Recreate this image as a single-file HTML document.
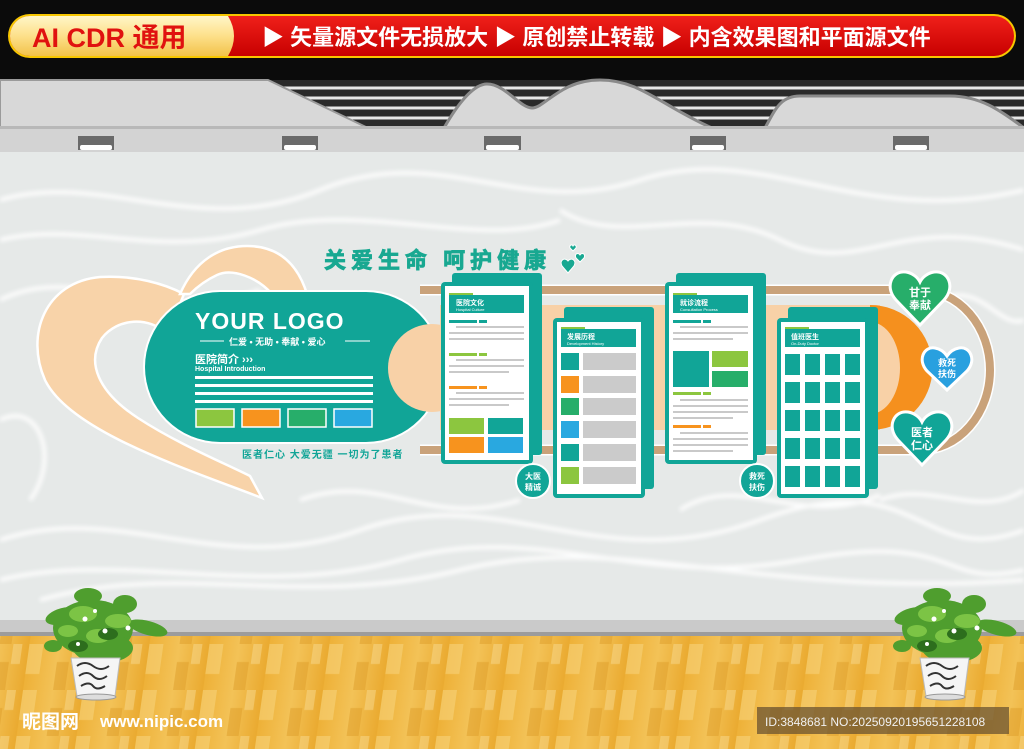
<!DOCTYPE html>
<html><head><meta charset="utf-8"><style>
html,body{margin:0;padding:0;width:1024px;height:749px;overflow:hidden;background:#000}
svg text{font-family:"Liberation Sans","Noto Sans CJK SC",sans-serif}
</style></head><body>
<svg width="1024" height="749" viewBox="0 0 1024 749" xmlns="http://www.w3.org/2000/svg">
<defs>
<linearGradient id="gold" x1="0" y1="0" x2="0" y2="1"><stop offset="0" stop-color="#fff6c8"/><stop offset="0.5" stop-color="#fde08a"/><stop offset="1" stop-color="#f2c24a"/></linearGradient>
<linearGradient id="red" x1="0" y1="0" x2="0" y2="1"><stop offset="0" stop-color="#f0201a"/><stop offset="1" stop-color="#c80000"/></linearGradient>
<linearGradient id="wood" x1="0" y1="0" x2="1" y2="0"><stop offset="0" stop-color="#eeb138"/><stop offset="0.5" stop-color="#f3c257"/><stop offset="1" stop-color="#eaaa30"/></linearGradient>
<pattern id="planks" width="60" height="46" patternUnits="userSpaceOnUse" patternTransform="skewX(-8)">
<rect width="60" height="46" fill="url(#wood)"/>
<rect x="0" y="0" width="14" height="30" fill="#f7d27a" opacity=".6"/>
<rect x="30" y="18" width="12" height="28" fill="#dd9d2a" opacity=".5"/>
<rect x="44" y="0" width="9" height="20" fill="#f8da8f" opacity=".5"/>
</pattern>
<filter id="blur"><feGaussianBlur stdDeviation="2"/></filter>
<g id="plant">
<g fill="#4f9e2e">
<ellipse cx="60" cy="42" rx="40" ry="28"/>
<ellipse cx="30" cy="30" rx="18" ry="8" transform="rotate(-15 30 30)"/>
<ellipse cx="115" cy="42" rx="20" ry="7" transform="rotate(15 115 42)"/>
<ellipse cx="55" cy="10" rx="14" ry="8"/>
<ellipse cx="92" cy="18" rx="12" ry="9"/>
<ellipse cx="70" cy="62" rx="30" ry="15"/>
<ellipse cx="20" cy="60" rx="9" ry="6"/>
</g>
<g fill="#7cc445"><ellipse cx="50" cy="28" rx="14" ry="8"/><ellipse cx="85" cy="35" rx="13" ry="7"/><ellipse cx="65" cy="50" rx="12" ry="7"/><ellipse cx="35" cy="45" rx="10" ry="6"/></g>
<g fill="#2d6e1d"><ellipse cx="75" cy="48" rx="10" ry="6"/><ellipse cx="45" cy="60" rx="10" ry="6"/></g>
<g fill="#fff"><circle cx="52" cy="33" r="2.5"/><circle cx="72" cy="45" r="2.5"/><circle cx="95" cy="42" r="2.5"/><circle cx="62" cy="25" r="2"/><circle cx="45" cy="58" r="2"/></g>
<path d="M38 72 H87 L82 110 H44Z" fill="#f5f5f5" stroke="#bbb"/>
<path d="M44 80 q8 -6 16 0 t16 0 M46 90 q8 -6 14 0 t14 0 M48 100 q8-5 12 0 t12 0" stroke="#333" fill="none" stroke-width="2"/>
<ellipse cx="63" cy="111" rx="20" ry="3" fill="#ddd" stroke="#999"/>
</g>
</defs>

<rect width="1024" height="80" fill="#0b0b0b"/>
<rect x="8" y="14" width="1008" height="44" rx="22" fill="#f7c600"/>
<rect x="10" y="16" width="1004" height="40" rx="20" fill="url(#red)"/>
<path d="M30 16 H228 Q240 36 228 56 H30 A20 20 0 0 1 30 16Z" fill="url(#gold)"/>
<text x="32" y="47" font-size="27" font-weight="bold" fill="#e0120f">AI CDR 通用</text>
<text x="262" y="45" font-size="22" fill="#fff" font-weight="bold">▶ 矢量源文件无损放大 ▶ 原创禁止转载  ▶ 内含效果图和平面源文件</text>

<rect x="0" y="80" width="1024" height="48" fill="#2a2a2a"/>
<g stroke="#e8e8e8" stroke-width="3">
<line x1="0" y1="88" x2="1024" y2="88"/><line x1="0" y1="98" x2="1024" y2="98"/>
<line x1="0" y1="108" x2="1024" y2="108"/><line x1="0" y1="118" x2="1024" y2="118"/>
</g>
<path d="M0 80 H268 L368 128 H0Z" fill="#d8d8d8" stroke="#9a9a9a" stroke-width="2"/>
<path d="M444 128 C460 100 475 84 487 84 C505 84 520 108 532 108 C545 108 560 80 600 80 C640 80 660 105 712 128Z" fill="#d8d8d8" stroke="#8a8a8a" stroke-width="3"/>
<path d="M765 128 C775 110 780 96 800 96 H950 C980 96 1000 110 1024 128Z" fill="#d8d8d8" stroke="#8a8a8a" stroke-width="3"/>
<rect x="0" y="126" width="1024" height="3" fill="#b8b8b8"/>
<rect x="0" y="129" width="1024" height="23" fill="#d3d3d3"/>
<g fill="#6a6a6a">
<rect x="78" y="136" width="36" height="14"/><rect x="282" y="136" width="36" height="14"/><rect x="484" y="136" width="37" height="14"/><rect x="690" y="136" width="36" height="14"/><rect x="893" y="136" width="36" height="14"/>
</g>
<g fill="#fff"><rect x="80" y="145" width="32" height="5" rx="2"/><rect x="284" y="145" width="32" height="5" rx="2"/><rect x="486" y="145" width="33" height="5" rx="2"/><rect x="692" y="145" width="32" height="5" rx="2"/><rect x="895" y="145" width="32" height="5" rx="2"/></g>

<rect x="0" y="152" width="1024" height="470" fill="#e6e9e8"/>
<g stroke="#ffffff" stroke-width="4" fill="none" opacity=".9" filter="url(#blur)">
<path d="M0 200 C100 170 200 240 320 190 S520 220 640 180 S860 230 1024 190"/>
<path d="M0 240 C80 220 160 260 260 230 S480 250 560 220"/>
<path d="M0 300 C80 260 160 330 260 290"/>
<path d="M560 210 C620 250 700 200 780 240 S900 210 1024 250"/>
<path d="M0 540 C120 500 220 580 360 530 S600 580 760 520 S920 570 1024 530"/>
<path d="M0 580 C120 550 260 600 400 560 S640 590 800 560 S940 590 1024 570"/>
<path d="M40 600 C180 560 300 610 460 570 S760 600 1024 580"/>
<path d="M300 500 C380 470 430 530 520 500"/>
<path d="M680 510 C740 470 800 530 880 495"/>
<path d="M0 420 C40 400 60 460 30 500"/>
<path d="M940 300 C980 280 1000 330 1024 320"/>
<path d="M880 500 C930 480 980 520 1024 490"/>
</g>
<rect x="0" y="620" width="1024" height="14" fill="#cacaca"/>
<rect x="0" y="632" width="1024" height="4" fill="#9c9c9c"/>
<rect x="0" y="636" width="1024" height="113" fill="url(#planks)"/>

<!-- peach heart -->
<g fill="#f8d3a9" stroke="#fff" stroke-width="2.5">
<path d="M262 498 C190 470 70 432 45 380 C25 335 45 282 100 277 C135 275 165 284 184 294 L168 334 C148 316 118 318 102 338 C86 362 98 392 138 418 C178 444 222 462 250 476 Z"/>
<path d="M180 294 C195 260 220 246 247 246 C277 246 297 262 307 294 L272 294 C257 277 232 268 217 275 C202 282 194 290 190 294 Z"/>
</g>

<path d="M420 290 H920 A70 80 0 0 1 920 450 H420" fill="none" stroke="#fff" stroke-width="11"/>
<path d="M420 290 H920 A70 80 0 0 1 920 450 H420" fill="none" stroke="#c9a27a" stroke-width="8"/>
<rect x="440" y="305" width="440" height="125" fill="#f8d1a7"/>
<path d="M870 305 A62 62 0 0 1 870 430Z" fill="#f5901e"/>
<path d="M870 322 A30 46 0 0 1 870 414Z" fill="#f8d1a7"/>

<rect x="143" y="290" width="300" height="154" rx="77" fill="#fff"/>
<rect x="145" y="292" width="296" height="150" rx="75" fill="#11a597"/>
<circle cx="432" cy="368" r="44" fill="#f8d1a7"/>
<text x="195" y="329" font-size="23" font-weight="bold" fill="#fff" letter-spacing="1">YOUR LOGO</text>
<line x1="200" y1="341" x2="224" y2="341" stroke="#fff"/><line x1="345" y1="341" x2="370" y2="341" stroke="#fff"/>
<text x="229" y="345" font-size="9" fill="#fff" font-weight="bold">仁爱 • 无助 • 奉献 • 爱心</text>
<text x="195" y="363" font-size="11" fill="#fff" font-weight="bold">医院简介 ›››</text>
<text x="195" y="371" font-size="7" fill="#fff" font-weight="bold">Hospital Introduction</text>
<g fill="#fff"><rect x="195" y="376" width="178" height="3"/><rect x="195" y="384" width="178" height="3"/><rect x="195" y="392" width="178" height="3"/><rect x="195" y="400" width="178" height="3"/></g>
<g stroke="#fff" stroke-width="1.5"><rect x="196" y="409" width="38" height="18" fill="#8cc63f"/><rect x="242" y="409" width="38" height="18" fill="#f7931e"/><rect x="288" y="409" width="38" height="18" fill="#27ae6a"/><rect x="334" y="409" width="38" height="18" fill="#29a8e0"/></g>
<text x="242" y="458" font-size="10" font-weight="bold" fill="#11a597" letter-spacing="1">医者仁心 大爱无疆 一切为了患者</text>

<text x="324" y="268" font-size="22" font-weight="bold" fill="#18a891" stroke="#18a891" stroke-width="0.8" letter-spacing="5">关爱生命 呵护健康</text>
<g fill="#18a891" stroke="#fff" stroke-width="1">
<path d="M562 266 c-3 -6 3 -9 6 -5 c3 -4 9 -1 6 5 l-6 7z"/>
<path d="M576 258 c-2 -4 2 -6 4 -3 c2 -3 6 -1 4 3 l-4 4z"/>
<path d="M570 248 c-1 -3 2 -4 3 -2 c1 -2 4 -1 3 2 l-3 3z"/>
</g>

<g id="cards">
<rect x="452" y="273" width="90" height="182" rx="3" fill="#11a597"/>
<rect x="441" y="282" width="92" height="182" rx="4" fill="#11a597"/>
<rect x="445" y="286" width="84" height="174" fill="#fff"/>
<rect x="449" y="293" width="24" height="6" fill="#8cc63f"/>
<rect x="449" y="295" width="75" height="18" fill="#11a597"/>
<text x="456" y="305" font-size="7" fill="#fff" font-weight="bold">医院文化</text>
<text x="456" y="311" font-size="4" fill="#fff">Hospital Culture</text>
<g fill="#c9c9c9"><rect x="456" y="326" width="68" height="2"/><rect x="449" y="332" width="75" height="2"/><rect x="449" y="338" width="75" height="2"/><rect x="456" y="359" width="68" height="2"/><rect x="449" y="365" width="75" height="2"/><rect x="449" y="371" width="60" height="2"/><rect x="456" y="392" width="68" height="2"/><rect x="449" y="398" width="75" height="2"/><rect x="449" y="404" width="60" height="2"/></g>
<rect x="449" y="320" width="28" height="3" fill="#11a597"/><rect x="479" y="320" width="8" height="3" fill="#11a597"/>
<rect x="449" y="353" width="28" height="3" fill="#8cc63f"/><rect x="479" y="353" width="8" height="3" fill="#8cc63f"/>
<rect x="449" y="386" width="28" height="3" fill="#f7931e"/><rect x="479" y="386" width="8" height="3" fill="#f7931e"/>
<rect x="449" y="418" width="35" height="16" fill="#8cc63f"/><rect x="488" y="418" width="35" height="16" fill="#11a597"/>
<rect x="449" y="437" width="35" height="16" fill="#f7931e"/><rect x="488" y="437" width="35" height="16" fill="#29a8e0"/>

<rect x="564" y="307" width="90" height="182" rx="3" fill="#11a597"/>
<rect x="553" y="318" width="92" height="180" rx="4" fill="#11a597"/>
<rect x="557" y="322" width="84" height="172" fill="#fff"/>
<rect x="561" y="327" width="24" height="6" fill="#8cc63f"/>
<rect x="561" y="329" width="75" height="18" fill="#11a597"/>
<text x="567" y="339" font-size="7" fill="#fff" font-weight="bold">发展历程</text>
<text x="567" y="345" font-size="4" fill="#fff">Development History</text>
<g fill="#cbcbcb"><rect x="583" y="353" width="53" height="17"/><rect x="583" y="376" width="53" height="17"/><rect x="583" y="398" width="53" height="17"/><rect x="583" y="421" width="53" height="17"/><rect x="583" y="444" width="53" height="17"/><rect x="583" y="467" width="53" height="17"/></g>
<rect x="561" y="353" width="18" height="17" fill="#11a597"/><rect x="561" y="376" width="18" height="17" fill="#f7931e"/><rect x="561" y="398" width="18" height="17" fill="#27ae6a"/><rect x="561" y="421" width="18" height="17" fill="#29a8e0"/><rect x="561" y="444" width="18" height="17" fill="#11a597"/><rect x="561" y="467" width="18" height="17" fill="#8cc63f"/>

<rect x="676" y="273" width="90" height="182" rx="3" fill="#11a597"/>
<rect x="665" y="282" width="92" height="182" rx="4" fill="#11a597"/>
<rect x="669" y="286" width="84" height="174" fill="#fff"/>
<rect x="673" y="293" width="24" height="6" fill="#8cc63f"/>
<rect x="673" y="295" width="75" height="18" fill="#11a597"/>
<text x="680" y="305" font-size="7" fill="#fff" font-weight="bold">就诊流程</text>
<text x="680" y="311" font-size="4" fill="#fff">Consultation Process</text>
<rect x="673" y="320" width="28" height="3" fill="#11a597"/><rect x="703" y="320" width="8" height="3" fill="#11a597"/>
<g fill="#c9c9c9"><rect x="680" y="326" width="68" height="2"/><rect x="673" y="332" width="75" height="2"/><rect x="673" y="338" width="60" height="2"/><rect x="680" y="399" width="68" height="2"/><rect x="673" y="405" width="75" height="2"/><rect x="673" y="411" width="75" height="2"/><rect x="673" y="417" width="60" height="2"/><rect x="680" y="432" width="68" height="2"/><rect x="673" y="438" width="75" height="2"/><rect x="673" y="444" width="75" height="2"/><rect x="673" y="450" width="60" height="2"/></g>
<rect x="673" y="351" width="36" height="36" fill="#11a597"/>
<rect x="712" y="351" width="36" height="16" fill="#8cc63f"/><rect x="712" y="371" width="36" height="16" fill="#27ae6a"/>
<rect x="673" y="392" width="28" height="3" fill="#8cc63f"/><rect x="703" y="392" width="8" height="3" fill="#8cc63f"/>
<rect x="673" y="425" width="28" height="3" fill="#f7931e"/><rect x="703" y="425" width="8" height="3" fill="#f7931e"/>

<rect x="788" y="307" width="90" height="182" rx="3" fill="#11a597"/>
<rect x="777" y="318" width="92" height="180" rx="4" fill="#11a597"/>
<rect x="781" y="322" width="84" height="172" fill="#fff"/>
<rect x="785" y="327" width="24" height="6" fill="#8cc63f"/>
<rect x="785" y="329" width="75" height="18" fill="#11a597"/>
<text x="791" y="339" font-size="7" fill="#fff" font-weight="bold">值班医生</text>
<text x="791" y="345" font-size="4" fill="#fff">On-Duty Doctor</text>
<g fill="#11a597">
<rect x="785" y="354" width="15" height="21"/><rect x="805" y="354" width="15" height="21"/><rect x="825" y="354" width="15" height="21"/><rect x="845" y="354" width="15" height="21"/>
<rect x="785" y="382" width="15" height="21"/><rect x="805" y="382" width="15" height="21"/><rect x="825" y="382" width="15" height="21"/><rect x="845" y="382" width="15" height="21"/>
<rect x="785" y="410" width="15" height="21"/><rect x="805" y="410" width="15" height="21"/><rect x="825" y="410" width="15" height="21"/><rect x="845" y="410" width="15" height="21"/>
<rect x="785" y="438" width="15" height="21"/><rect x="805" y="438" width="15" height="21"/><rect x="825" y="438" width="15" height="21"/><rect x="845" y="438" width="15" height="21"/>
<rect x="785" y="466" width="15" height="21"/><rect x="805" y="466" width="15" height="21"/><rect x="825" y="466" width="15" height="21"/><rect x="845" y="466" width="15" height="21"/>
</g>
</g>

<circle cx="533" cy="481" r="17" fill="#11a597" stroke="#fff" stroke-width="2"/>
<text x="533" y="479" font-size="8" fill="#fff" font-weight="bold" text-anchor="middle">大医</text>
<text x="533" y="490" font-size="8" fill="#fff" font-weight="bold" text-anchor="middle">精诚</text>
<circle cx="757" cy="481" r="17" fill="#11a597" stroke="#fff" stroke-width="2"/>
<text x="757" y="479" font-size="8" fill="#fff" font-weight="bold" text-anchor="middle">救死</text>
<text x="757" y="490" font-size="8" fill="#fff" font-weight="bold" text-anchor="middle">扶伤</text>

<g stroke="#fff" stroke-width="3">
<path d="M920 325 L896 300 C884 287 892 270 906 272 C913 273 918 278 920 282 C922 278 927 273 934 272 C948 270 956 287 944 300Z" fill="#27ae6a"/>
<path d="M947 390 L927 371 C917 360 924 346 935 348 C941 349 945 353 947 356 C949 353 953 349 959 348 C970 346 977 360 967 371Z" fill="#29a0df"/>
<path d="M922 465 L898 440 C886 427 894 410 908 412 C915 413 920 418 922 422 C924 418 929 413 936 412 C950 410 958 427 946 440Z" fill="#11a597"/>
</g>
<g font-size="11" fill="#fff" font-weight="bold" text-anchor="middle">
<text x="920" y="296">甘于</text><text x="920" y="309">奉献</text>
<text x="947" y="366" font-size="9">救死</text><text x="947" y="377" font-size="9">扶伤</text>
<text x="922" y="436">医者</text><text x="922" y="449">仁心</text>
</g>

<use href="#plant" x="33" y="586"/>
<use href="#plant" x="882" y="586"/>

<text x="22" y="728" font-size="19" fill="#fff" font-weight="bold">昵图网</text>
<text x="100" y="727" font-size="17" fill="#fff" font-weight="bold">www.nipic.com</text>
<rect x="757" y="707" width="252" height="27" fill="#6b5330" opacity=".75"/>
<text x="765" y="726" font-size="12" fill="#f0f0f0">ID:3848681 NO:20250920195651228108</text>
</svg>
</body></html>
